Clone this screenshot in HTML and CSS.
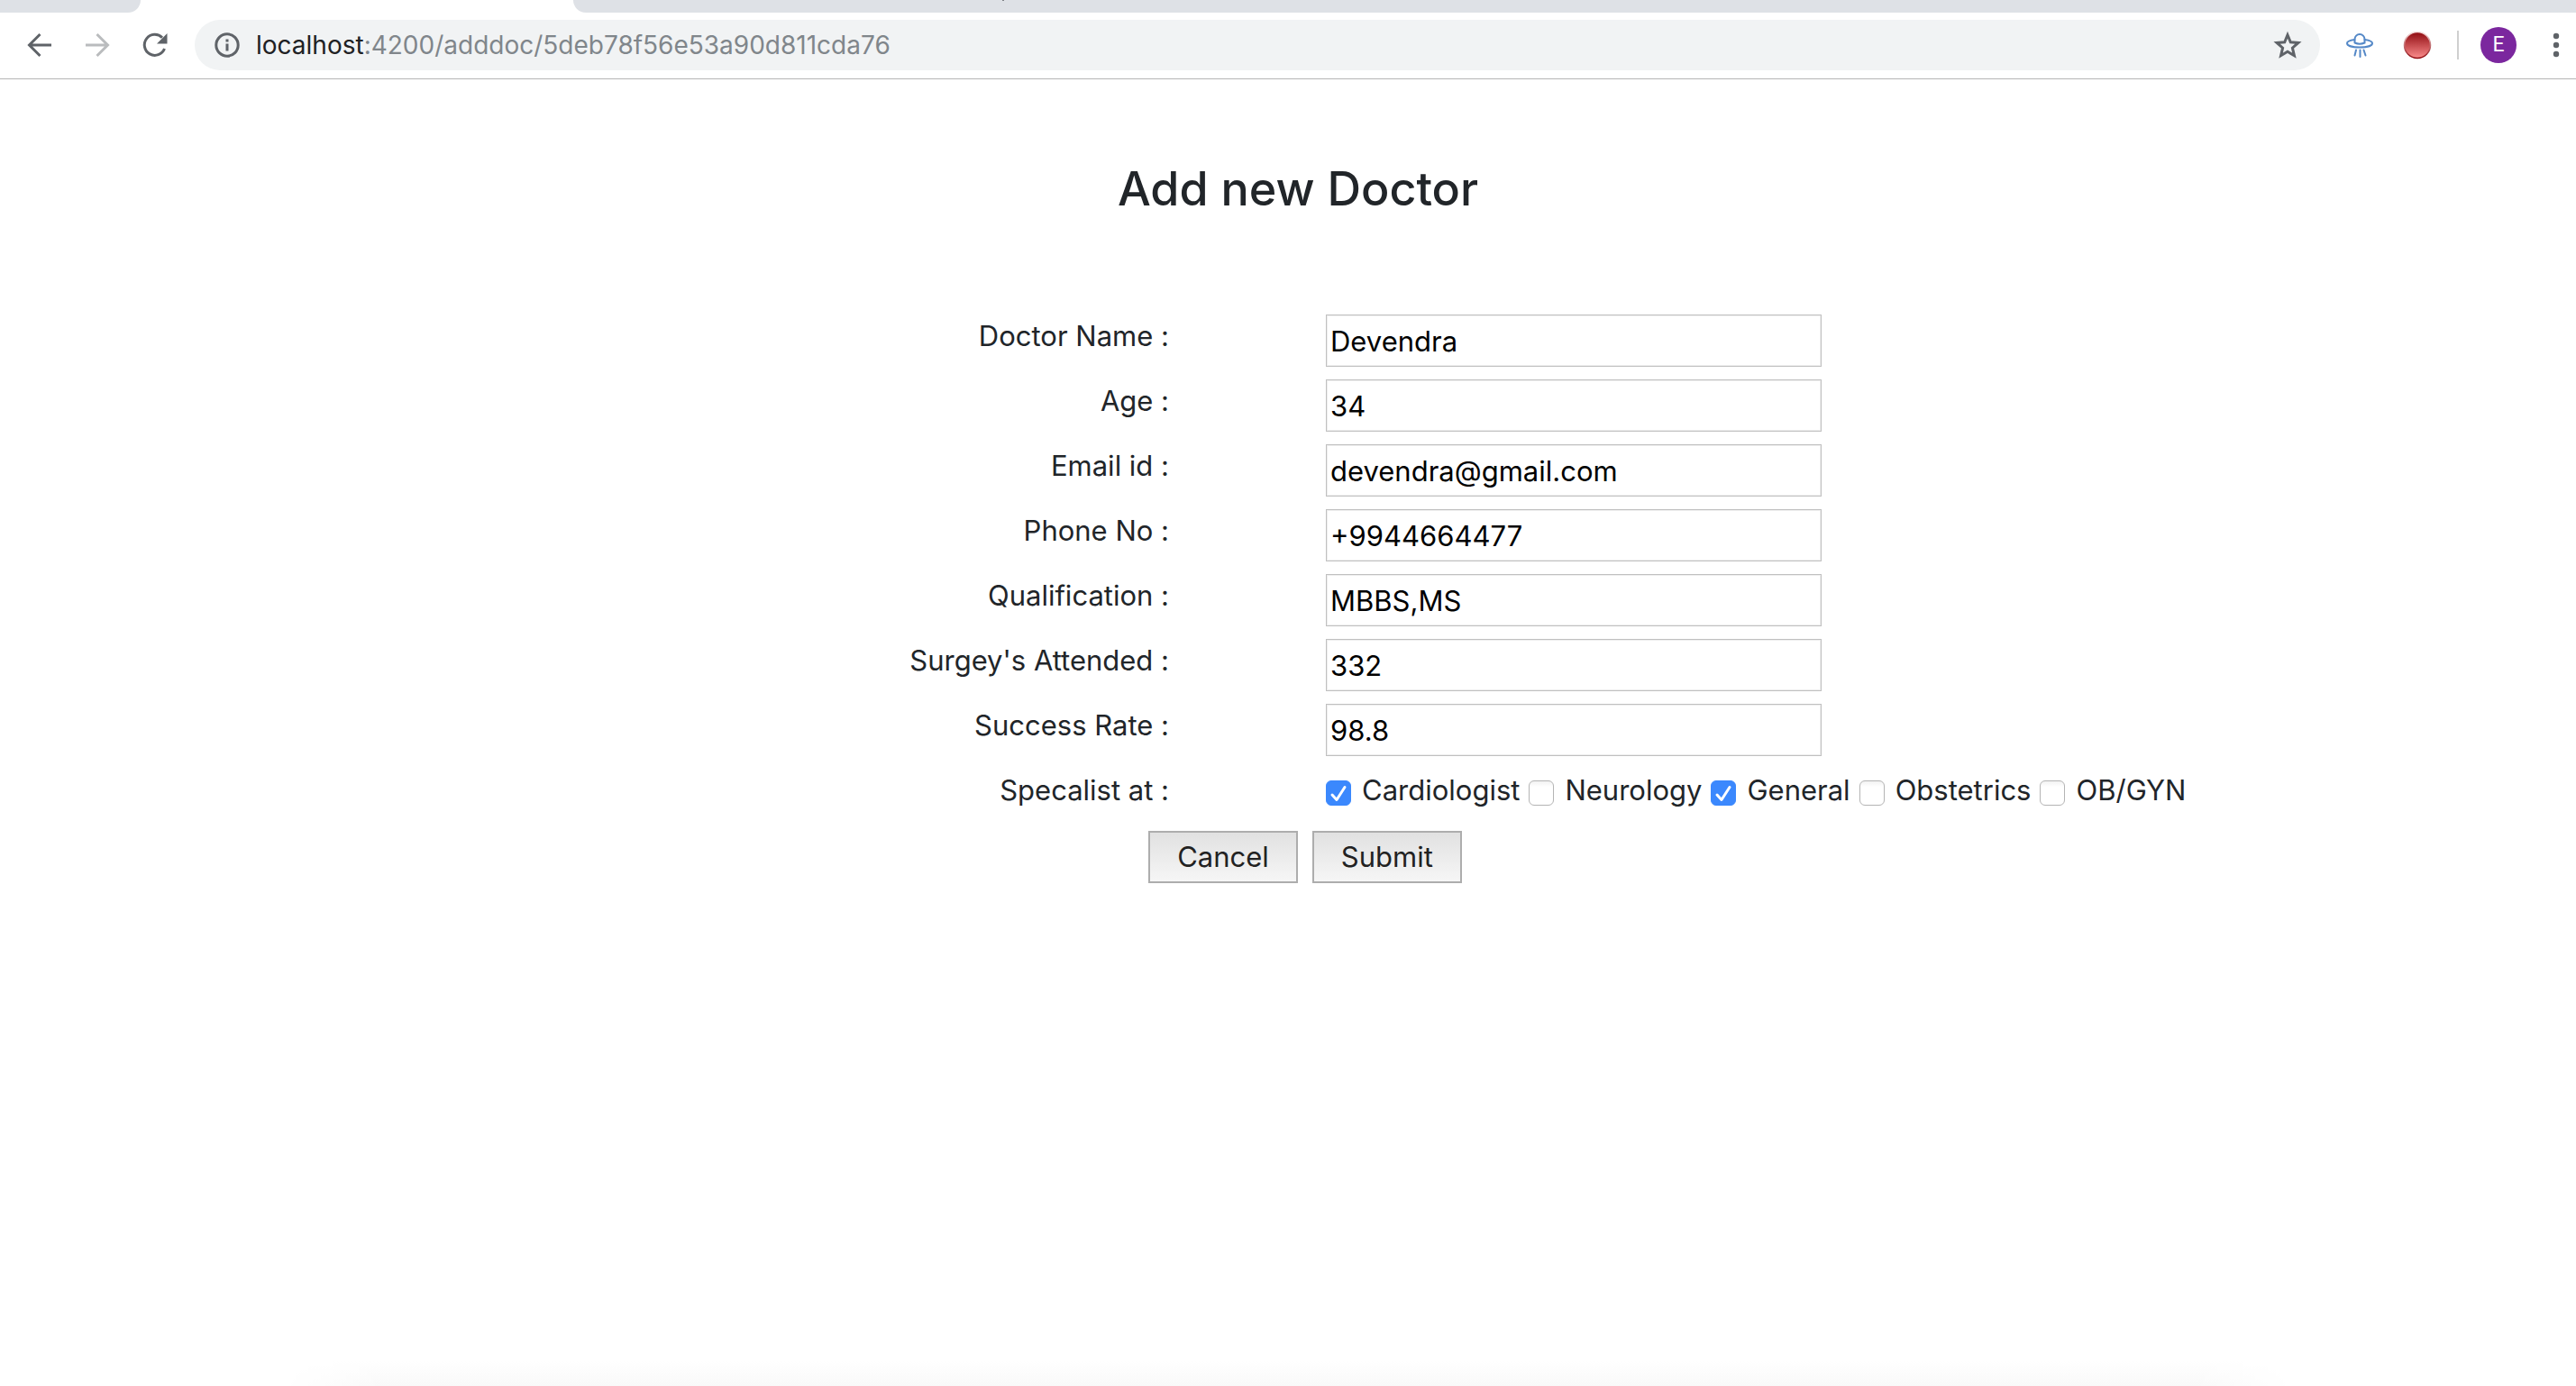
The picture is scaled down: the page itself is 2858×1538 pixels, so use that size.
FILE: index.html
```
<!DOCTYPE html>
<html lang="en">
<head>
<meta charset="utf-8">
<title>Add new Doctor</title>
<link rel="stylesheet" href="styles.css">
</head>
<body>
<header class="browser">
  <div class="tabstrip">
    <div class="tab tab-before"></div>
    <div class="tab tab-after"></div>
  </div>
  <div class="toolbar">
    <nav class="nav" aria-label="History">
      <button class="icon-button" type="button" aria-label="Back">
        <svg width="32" height="32" viewBox="0 0 32 32" fill="none" stroke="#5f6368" stroke-width="3"><path d="M29 16H5M16.500 4L4.500 16l12 12"/></svg>
      </button>
      <button class="icon-button" type="button" aria-label="Forward">
        <svg width="32" height="32" viewBox="0 0 32 32" fill="none" stroke="#babcbe" stroke-width="3"><path d="M3 16h24M15.500 4l12 12-12 12"/></svg>
      </button>
      <button class="icon-button" type="button" aria-label="Reload">
        <svg width="32" height="32" viewBox="0 0 32 32" fill="none" stroke="#5f6368" stroke-width="3"><path d="M26.500 20A11.500 11.500 0 1 1 24 7.800"/><path d="M29.500 3v11.500H18z" fill="#5f6368" stroke="none"/></svg>
      </button>
    </nav>
    <div class="omnibox">
      <svg width="28" height="28" viewBox="0 0 28 28" fill="none" stroke="#5f6368"><circle cx="14" cy="14" r="12.200" stroke-width="3"/><path d="M14 12.500v8M14 7.500v3" stroke-width="3"/></svg>
      <div class="url" role="textbox" aria-label="Address"><span class="host">localhost</span>:4200/adddoc/5deb78f56e53a90d811cda76</div>
      <button class="icon-button" type="button" aria-label="Bookmark this page">
        <svg width="32" height="32" viewBox="0 0 32 32" fill="none" stroke="#5f6368" stroke-width="3"><path d="M16 4.800l3.300 8 8.600.700-6.500 5.700 2 8.500-7.400-4.500-7.400 4.500 2-8.500-6.500-5.700 8.600-.700z"/></svg>
      </button>
    </div>
    <div class="extensions">
      <button class="icon-button" type="button" aria-label="UFO extension">
        <svg width="32" height="32" viewBox="0 0 32 32" fill="none" stroke="#5488c7" stroke-width="2" stroke-linecap="round"><path d="M10.500 13.500V9.500a5.500 5.500 0 0 1 11 0V13.500q-5.500 2.500-11 0"/><path d="M10.500 10C5 10.800 2 12.300 2 14c0 2.700 6 4.500 14 4.500s14-1.800 14-4.500c0-1.700-3-3.200-8.500-4"/><path d="M12 21.500l-1.500 6M16.500 21.500v7.500M20.500 21.500l2 6"/></svg>
      </button>
      <button class="icon-button" type="button" aria-label="Recorder extension">
        <svg width="32" height="32" viewBox="0 0 32 32"><defs><linearGradient id="red" x1="0" y1="0" x2="0" y2="1"><stop offset="0" stop-color="#8f0a10"/><stop offset="1" stop-color="#fb8c8c"/></linearGradient><linearGradient id="rim" x1="0" y1="0" x2="0" y2="1"><stop offset="0" stop-color="#f5dcdc"/><stop offset="1" stop-color="#8f0a10"/></linearGradient></defs><circle cx="16" cy="16" r="14.500" fill="url(#red)" stroke="url(#rim)" stroke-width="1.500"/></svg>
      </button>
    </div>
    <div class="profile">
      <button class="avatar" type="button">E</button>
    </div>
    <button class="icon-button menu" type="button" aria-label="Menu">
      <svg width="8" height="32" viewBox="0 0 8 32" fill="#5f6368"><circle cx="4" cy="6" r="3.200"/><circle cx="4" cy="16" r="3.200"/><circle cx="4" cy="26" r="3.200"/></svg>
    </button>
  </div>
</header>
<main class="page">
  <h2 class="title">Add new Doctor</h2>
  <form class="form">
    <div class="rows">
      <label class="label" for="name">Doctor Name :</label>
      <input class="field" id="name" type="text" value="Devendra">
      <label class="label" for="age">Age :</label>
      <input class="field" id="age" type="text" value="34">
      <label class="label" for="email">Email id :</label>
      <input class="field" id="email" type="text" value="devendra@gmail.com">
      <label class="label" for="phone">Phone No :</label>
      <input class="field" id="phone" type="text" value="+9944664477">
      <label class="label" for="qualification">Qualification :</label>
      <input class="field" id="qualification" type="text" value="MBBS,MS">
      <label class="label" for="surgeries">Surgey's Attended :</label>
      <input class="field" id="surgeries" type="text" value="332">
      <label class="label" for="rate">Success Rate :</label>
      <input class="field" id="rate" type="text" value="98.8">
      <span class="label" id="specialist">Specalist at :</span>
      <div class="checks" role="group" aria-labelledby="specialist">
        <label class="check"><input class="box" type="checkbox" checked>Cardiologist</label>
        <label class="check"><input class="box" type="checkbox">Neurology</label>
        <label class="check"><input class="box" type="checkbox" checked>General</label>
        <label class="check"><input class="box" type="checkbox">Obstetrics</label>
        <label class="check"><input class="box" type="checkbox">OB/GYN</label>
      </div>
    </div>
    <div class="actions">
      <button class="button" type="button">Cancel</button>
      <button class="button" type="submit">Submit</button>
    </div>
  </form>
</main>
<footer class="shade"></footer>
</body>
</html>
```
FILE: styles.css
```
* {
  box-sizing: border-box;
}

body {
  display: flex;
  flex-direction: column;
  min-height: 100vh;
  margin: 0;
  background: #fff;
  color: #212529;
  font: 31px/48px Inter, "Liberation Sans", sans-serif;
}

button,
input {
  font: inherit;
  margin: 0;
}

/* Browser bar */
.browser {
  border-bottom: 1px solid #b6b6b6;
}

.tabstrip {
  display: flex;
  justify-content: space-between;
  gap: 480px;
  height: 14px;
}

.tab {
  background: #dee1e6;
}

.tab-before {
  flex: 0 0 156px;
  border-bottom-right-radius: 16px;
}

.tab-after {
  flex: 1;
  border-bottom-left-radius: 16px;
}

.tab-after::before {
  content: "";
  display: block;
  width: 2px;
  height: 1px;
  margin-left: 476px;
  background: #7d8085;
}

.toolbar {
  display: flex;
  align-items: center;
  height: 73px;
  padding: 0 18px 1px 28px;
}

.nav {
  display: flex;
  gap: 32px;
}

.icon-button {
  display: flex;
  padding: 0;
  border: 0;
  background: none;
}

.omnibox {
  flex: 1;
  display: flex;
  align-items: center;
  gap: 18px;
  height: 56px;
  margin-left: 28px;
  padding: 0 20px 0 22px;
  border-radius: 28px;
  background: #f1f3f4;
}

.url {
  flex: 1;
  color: #80868b;
  font-size: 28px;
}

.host {
  color: #202124;
}

.extensions {
  display: flex;
  gap: 32px;
  margin: 0 28px;
}

.profile {
  display: flex;
  align-items: center;
  gap: 24px;
}

.profile::before {
  content: "";
  width: 2px;
  height: 32px;
  background: #cfcfcf;
}

.avatar {
  width: 40px;
  height: 40px;
  padding: 0;
  border: 0;
  border-radius: 50%;
  background: #7b279e;
  color: #fff;
  font: 23px/40px Roboto, sans-serif;
}

.menu {
  margin-left: 40px;
}

/* Form page */
.page {
  flex: 1;
  padding: 88px 0 0 22px;
}

.title {
  margin: 0;
  font-size: 52px;
  font-weight: 500;
  line-height: 68px;
  text-align: center;
}

.rows {
  display: grid;
  grid-template-columns: 1fr 1fr;
  gap: 14px 174px;
  margin-top: 105px;
  padding-right: 112px;
}

.label {
  text-align: right;
}

.field {
  width: 550px;
  height: 58px;
  padding: 0 4px;
  border: 1px solid #c0c0c0;
  border-radius: 0;
  box-shadow: inset 0 0 0 1px #eee;
  background: #fff;
  color: #000;
}

.checks {
  display: flex;
  gap: 10px;
  height: 48px;
  white-space: nowrap;
}

.check {
  display: flex;
  align-items: center;
  gap: 12px;
}

.box {
  appearance: none;
  flex: none;
  width: 28px;
  height: 28px;
  margin-top: 6px;
  border: 1px solid #b4b4b4;
  border-radius: 6px;
  background: linear-gradient(#f2f2f2, #fff 6px);
}

.box:checked {
  border-color: #3b88fd;
  background: #3b88fd url("data:image/svg+xml,%3Csvg xmlns='http://www.w3.org/2000/svg' viewBox='0 0 26 26' fill='none' stroke='white' stroke-width='3' stroke-linecap='round' stroke-linejoin='round'%3E%3Cpath d='M6 15l5 5.500L20 6.500'/%3E%3C/svg%3E");
}

.actions {
  display: flex;
  justify-content: center;
  gap: 16px;
  margin-top: 21px;
  padding-left: 16px;
}

.button {
  height: 58px;
  padding: 0 30px;
  border: 2px solid #adadad;
  background: linear-gradient(#e1e1e1, #f6f6f6);
  color: #222;
}

/* Faint shade along the bottom edge */
.shade {
  height: 28px;
  margin: 0 11%;
  background: linear-gradient(#fff, #f9f9f9);
  mask-image: linear-gradient(90deg, transparent, #000 5%, #000 95%, transparent);
}
```
